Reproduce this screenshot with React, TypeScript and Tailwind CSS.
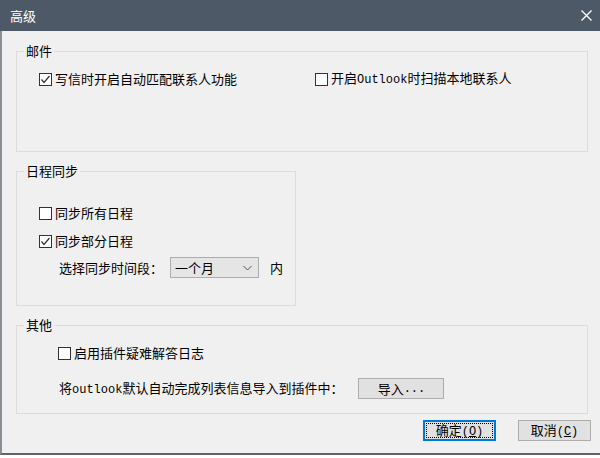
import React from "react";

const CJK = '"Noto Sans CJK SC", "Liberation Sans", sans-serif';

function Mono({ children }: { children: React.ReactNode }) {
  return <span className="font-['Liberation_Mono'] text-[12px]">{children}</span>;
}

function Check({ checked }: { checked?: boolean }) {
  return (
    <div className="w-[13px] h-[13px] shrink-0 border border-[#333333] bg-white flex items-center justify-center">
      {checked && (
        <svg width="11" height="11" viewBox="0 0 11 11">
          <polyline points="1.5,5.5 4,8.5 9.5,2" fill="none" stroke="#333333" strokeWidth="1.2" />
        </svg>
      )}
    </div>
  );
}

function Row({ checked, children }: { checked?: boolean; children: React.ReactNode }) {
  return (
    <div className="flex items-center gap-[3px] h-[16px]">
      <Check checked={checked} />
      <span className="leading-[16px] whitespace-nowrap">{children}</span>
    </div>
  );
}

function Group({ label, className, children }: { label: string; className: string; children: React.ReactNode }) {
  return (
    <div className={`relative border border-[#dcdcdc] ${className}`}>
      <span className="absolute left-[7px] top-[-9px] px-[2px] bg-[#f0f0f0] leading-[16px]">{label}</span>
      {children}
    </div>
  );
}

export default function App() {
  return (
    <div className="w-[600px] h-[458px] bg-white flex flex-col text-[13px] text-black" style={{ fontFamily: CJK }}>
      <div className="h-[31px] shrink-0 bg-[#4e5968] flex items-center justify-between pl-[10px] pr-[8px] text-white">
        <span className="leading-[16px]">高级</span>
        <svg width="11" height="11" viewBox="0 0 11 11">
          <path d="M0.5 0.5 L10.5 10.5 M10.5 0.5 L0.5 10.5" stroke="#ffffff" strokeWidth="1.3" />
        </svg>
      </div>
      <div className="h-[424px] shrink-0 bg-[#f0f0f0] border-l-2 border-b-2 border-l-[#8a8f96] border-b-[#5f636a] flex flex-col pl-[14px] pt-[20px]">
        <Group label="邮件" className="w-[572px] h-[101px] pt-[19px] pl-[22px]">
          <div className="flex">
            <div className="w-[276px]">
              <Row checked>写信时开启自动匹配联系人功能</Row>
            </div>
            <Row>
              开启<Mono>Outlook</Mono>时扫描本地联系人
            </Row>
          </div>
        </Group>

        <Group label="日程同步" className="mt-[19px] w-[280px] h-[135px] pt-[33px] pl-[22px]">
          <Row>同步所有日程</Row>
          <div className="mt-[12px]">
            <Row checked>同步部分日程</Row>
          </div>
          <div className="mt-[8px] ml-[20px] flex items-center h-[21px]">
            <span className="w-[104px] whitespace-nowrap">选择同步时间段：</span>
            <div className="ml-[7px] w-[89px] h-[21px] bg-[#e5e5e5] border border-[#adadad] flex items-center justify-between pl-[4px] pr-[6px]">
              <span className="leading-[16px]">一个月</span>
              <svg width="9" height="6" viewBox="0 0 9 6">
                <polyline points="0.5,1 4.5,5 8.5,1" fill="none" stroke="#555555" strokeWidth="1" />
              </svg>
            </div>
            <span className="ml-[11px]">内</span>
          </div>
        </Group>

        <Group label="其他" className="mt-[19px] w-[572px] h-[89px] pt-[19px] pl-[41px]">
          <Row>启用插件疑难解答日志</Row>
          <div className="mt-[17px] ml-[1px] flex items-center h-[21px]">
            <span className="whitespace-nowrap">
              将<Mono>outlook</Mono>默认自动完成列表信息导入到插件中：
            </span>
            <div className="ml-[15px] w-[86px] h-[21px] bg-[#e1e1e1] border border-[#adadad] flex items-center justify-center">
              导入<Mono>...</Mono>
            </div>
          </div>
        </Group>

        <div className="mt-[6px] flex justify-end pr-[9px] gap-[22px]">
          <div className="relative w-[73px] h-[21px] bg-[#e1e1e1] border-2 border-[#0078d7] flex items-center justify-center">
            <span className="absolute inset-[1px] border border-dotted border-black" />
            <span>
              确定<Mono>(<span className="underline">O</span>)</Mono>
            </span>
          </div>
          <div className="w-[73px] h-[21px] bg-[#e1e1e1] border border-[#adadad] flex items-center justify-center">
            <span>
              取消<Mono>(<span className="underline">C</span>)</Mono>
            </span>
          </div>
        </div>
      </div>
    </div>
  );
}
